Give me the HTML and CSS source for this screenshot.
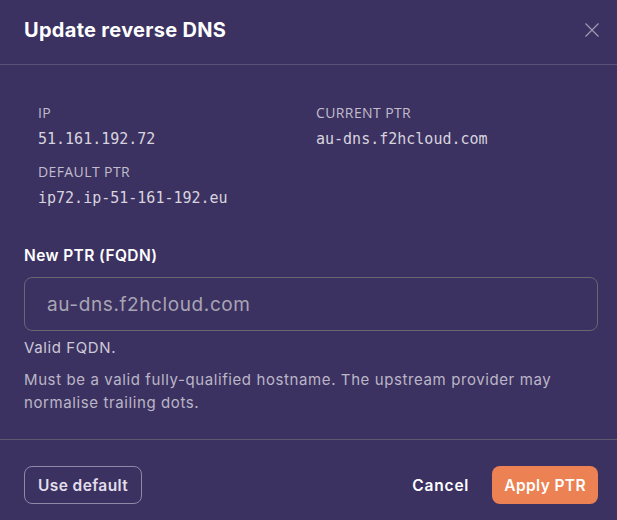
FILE: index.html
```html
<!DOCTYPE html>
<html lang="en">
<head>
    <meta charset="UTF-8">
    <meta name="viewport" content="width=device-width, initial-scale=1.0">
    <title>Update reverse DNS</title>
    <link rel="stylesheet" href="styles.css">
</head>
<body>

<div class="modal">
    <div class="modal-header">
        <h2>Update reverse DNS</h2>
        <button class="close-btn" aria-label="Close">
            <svg width="16" height="16" viewBox="0 0 16 16">
                <path d="M1.5 1.5 L14.5 14.5 M14.5 1.5 L1.5 14.5" stroke="currentColor" stroke-width="1.2" fill="none"/>
            </svg>
        </button>
    </div>

    <div class="modal-body">
        <div class="info-grid">
            <div class="info-item">
                <div class="info-label">IP</div>
                <div class="info-value">51.161.192.72</div>
            </div>
            <div class="info-item">
                <div class="info-label">CURRENT PTR</div>
                <div class="info-value">au-dns.f2hcloud.com</div>
            </div>
            <div class="info-item">
                <div class="info-label">DEFAULT PTR</div>
                <div class="info-value">ip72.ip-51-161-192.eu</div>
            </div>
        </div>

        <label class="field-label" for="ptr">New PTR (FQDN)</label>
        <input class="field-input" id="ptr" type="text" value="au-dns.f2hcloud.com">
        <p class="field-status">Valid FQDN.</p>
        <p class="field-help">Must be a valid fully-qualified hostname. The upstream provider may normalise trailing dots.</p>
    </div>

    <div class="modal-footer">
        <button class="btn btn-outline">Use default</button>
        <div class="footer-right">
            <button class="btn btn-link">Cancel</button>
            <button class="btn btn-primary">Apply PTR</button>
        </div>
    </div>
</div>

</body>
</html>
```

FILE: styles.css
```css
body {
    margin: 0;
    font-family: 'Inter', 'Noto Sans', sans-serif;
    background-color: #3b3262;
    color: #eee;
}

.modal {
    width: 617px;
    height: 520px;
    background-color: #3b3262;
}

.modal-header {
    display: flex;
    align-items: center;
    justify-content: space-between;
    height: 65px;
    box-sizing: border-box;
    padding: 0 17px 4px 24px;
    border-bottom: 1px solid #5a5279;
}

.modal-header h2 {
    margin: 0;
    font-size: 20px;
    font-weight: 700;
    color: #fff;
    letter-spacing: 0.3px;
}

.close-btn {
    background: none;
    border: none;
    padding: 0;
    color: #9f9ab3;
    cursor: pointer;
    display: flex;
}

.modal-body {
    padding: 39px 19px 0 24px;
    height: 375px;
    box-sizing: border-box;
    border-bottom: 1px solid #5e5a6e;
}

.info-grid {
    display: grid;
    grid-template-columns: 1fr 1fr;
    column-gap: 16px;
    row-gap: 15px;
    padding: 0 20px 0 14px;
    margin-bottom: 39px;
}

.info-label {
    font-family: 'Open Sans', sans-serif;
    font-size: 14px;
    color: #c2bdcc;
    letter-spacing: 0.4px;
    line-height: 18px;
}

.info-value {
    font-family: 'DejaVu Sans Mono', monospace;
    font-size: 15px;
    color: #d8d4de;
    line-height: 18px;
    margin-top: 8px;
}

.field-label {
    display: block;
    font-size: 15.5px;
    font-weight: 600;
    letter-spacing: 0.4px;
    color: #fff;
    margin-bottom: 12px;
}

.field-input {
    display: block;
    width: 100%;
    box-sizing: border-box;
    height: 54px;
    padding: 0 22px;
    background: transparent;
    border: 1px solid #6a6672;
    border-radius: 8px;
    font-family: 'Inter', sans-serif;
    font-size: 19px;
    letter-spacing: 0.6px;
    color: #a9a5b3;
    outline: none;
}

.field-status {
    margin: 6px 0 0;
    font-size: 15px;
    letter-spacing: 0.6px;
    color: #cdc9d6;
    line-height: 22px;
}

.field-help {
    margin: 9px 0 0;
    font-size: 15px;
    letter-spacing: 0.6px;
    color: #bbb6c6;
    line-height: 23px;
}

.modal-footer {
    display: flex;
    align-items: center;
    justify-content: space-between;
    padding: 26px 19px 0 24px;
}

.footer-right {
    display: flex;
    align-items: center;
    gap: 10px;
}

.btn {
    font-family: 'Inter', sans-serif;
    font-size: 15.5px;
    font-weight: 600;
    letter-spacing: 0.4px;
    height: 38px;
    padding: 0 12px;
    border-radius: 8px;
    cursor: pointer;
}

.btn-outline {
    background: transparent;
    border: 1px solid #8f88a9;
    color: #e2deea;
    padding: 0 13px;
}

.btn-link {
    background: transparent;
    border: none;
    color: #fff;
    padding: 0 13px;
    letter-spacing: 0.8px;
}

.btn-primary {
    background-color: #ec8154;
    border: none;
    color: #fff;
    padding: 0 12px;
}
```
